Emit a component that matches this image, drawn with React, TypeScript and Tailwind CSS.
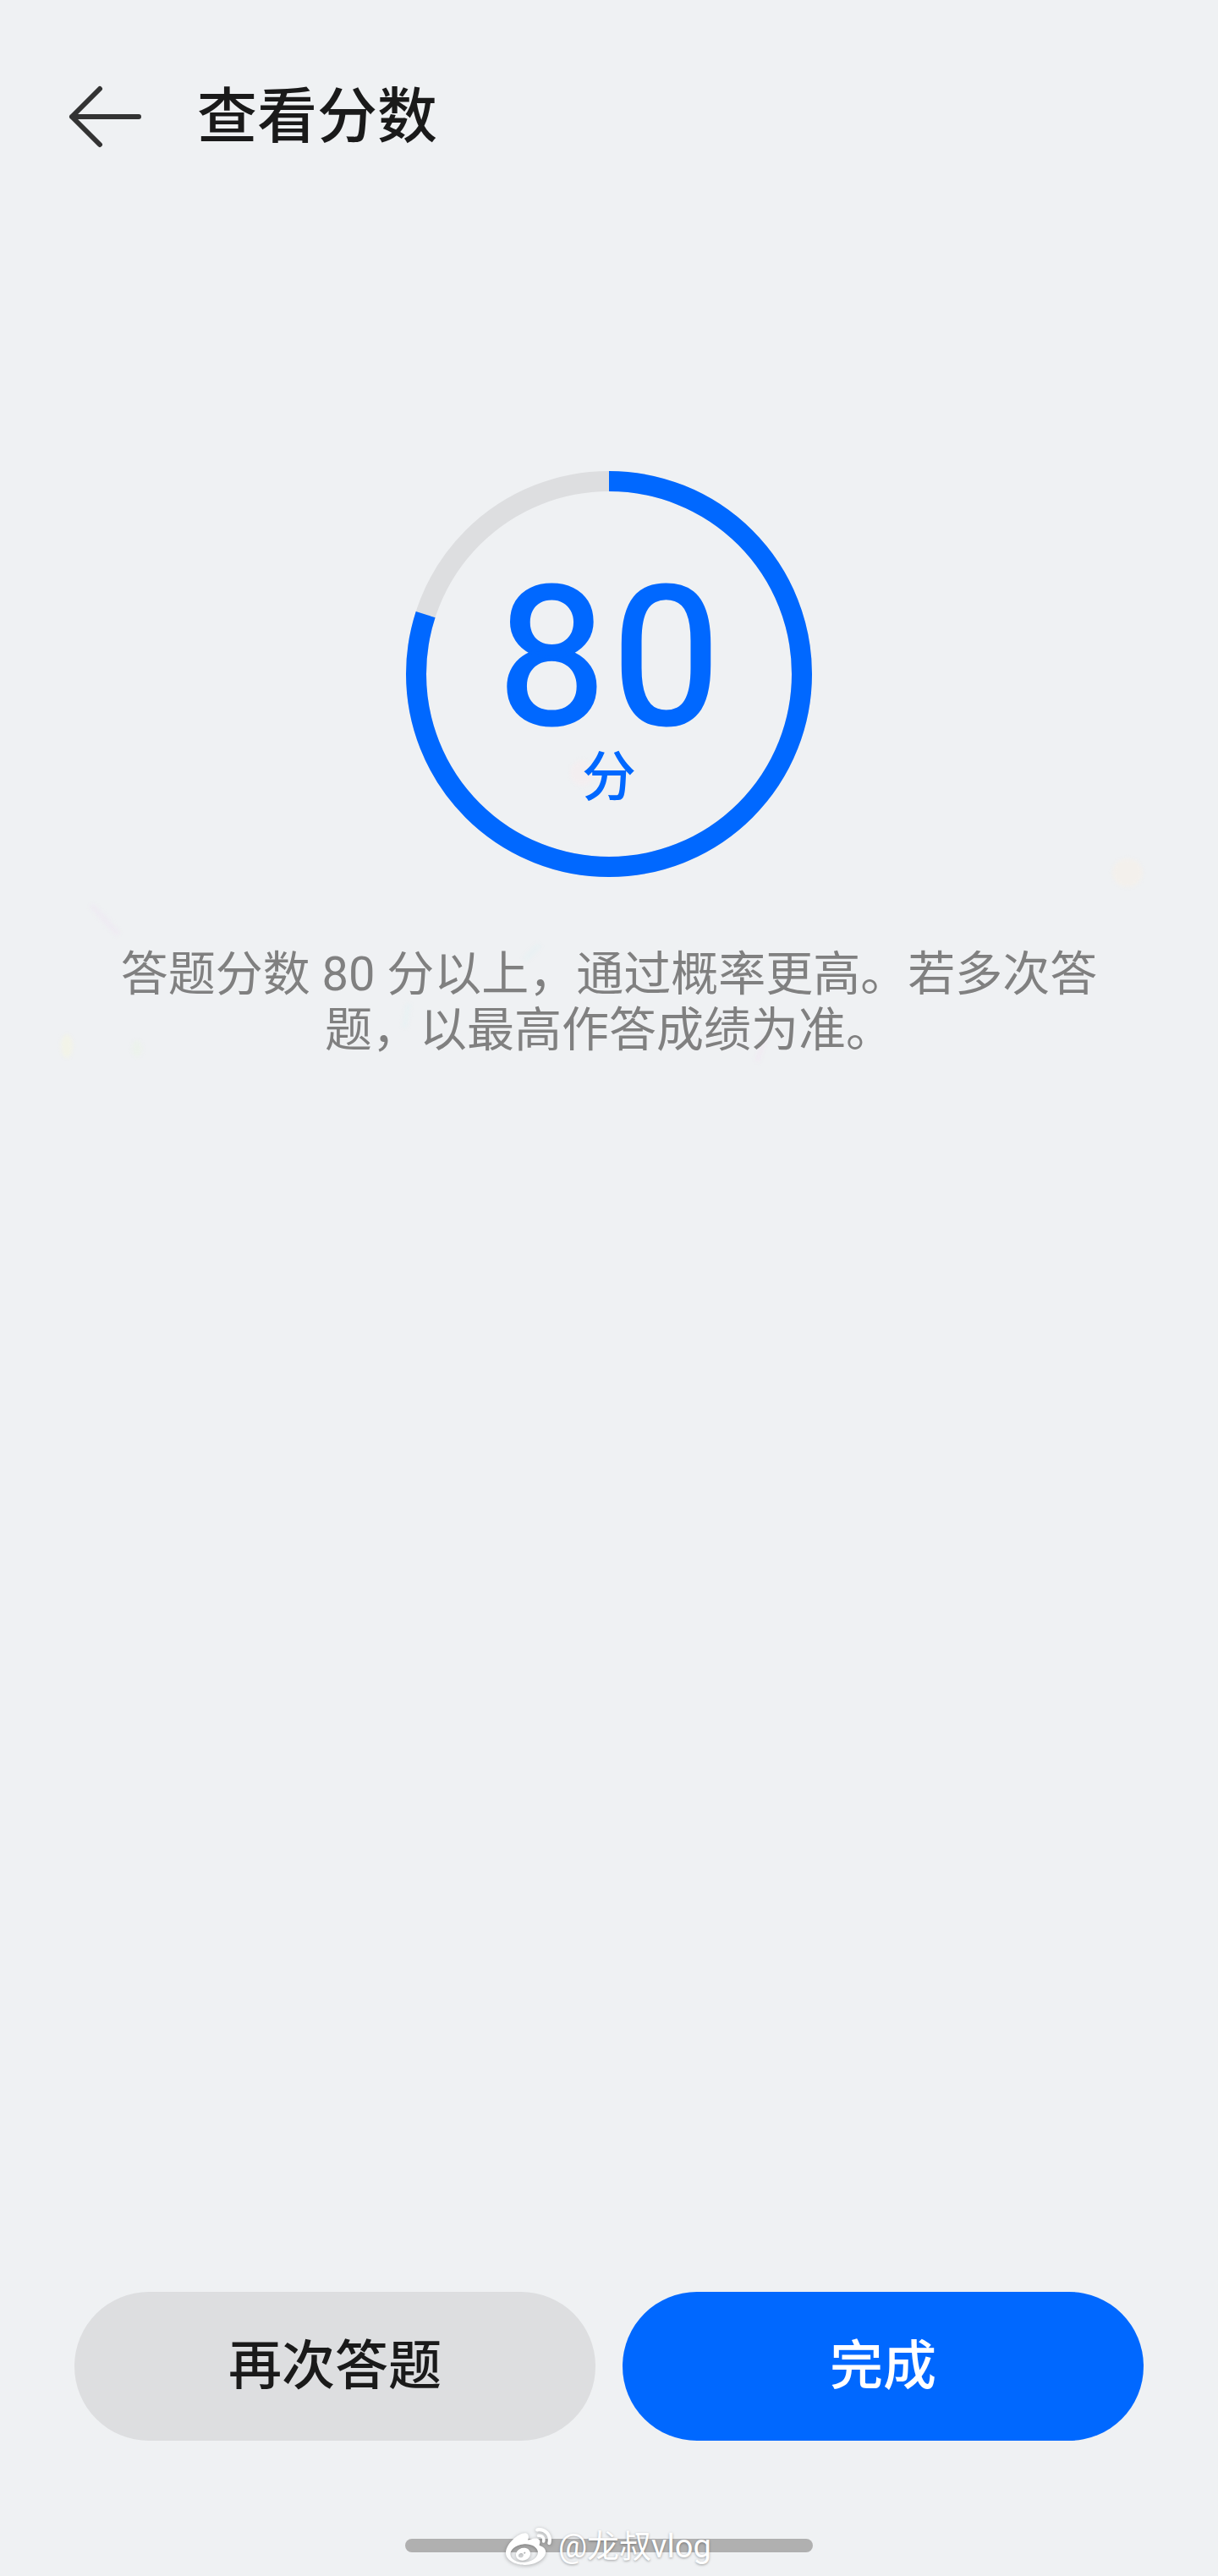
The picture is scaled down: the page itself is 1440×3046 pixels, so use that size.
import { SiSinaweibo } from "react-icons/si"

const cjk = "font-['Roboto','Noto_Sans_CJK_SC',sans-serif]"

function BackArrow() {
  return (
    <svg width="90" height="74" viewBox="0 0 90 74" fill="none" className="text-[#333333]">
      <path d="M38 4 L5 37 L38 70 M5 37 H84" stroke="currentColor" strokeWidth="6" strokeLinecap="round" strokeLinejoin="round" />
    </svg>
  )
}

function Confetti() {
  return (
    <svg width="1440" height="1300" viewBox="0 0 1440 1300" className="pointer-events-none absolute top-0 left-0 -z-10 blur-[2px]">
      <ellipse cx="1333" cy="1032" rx="18" ry="17" fill="#f3f0ec" />
      <ellipse cx="688" cy="914" rx="14" ry="15" fill="#f3eef0" />
      <path d="M108 1070 L140 1105" stroke="#eeebf2" strokeWidth="7" />
      <path d="M638 1117 L620 1135" stroke="#e9f1f3" strokeWidth="6" />
      <path d="M483 1187 L478 1215" stroke="#e9f1f3" strokeWidth="6" />
      <ellipse cx="79" cy="1237" rx="7" ry="14" fill="#f2f3e8" />
      <ellipse cx="162" cy="1240" rx="6" ry="10" fill="#ecf2ec" />
      <path d="M905 1225 L895 1255" stroke="#f0ebf2" strokeWidth="6" />
    </svg>
  )
}

function ScoreRing({ score }: { score: number }) {
  return (
    <div className="relative h-[480px] w-[480px]">
      <svg width="480" height="480" viewBox="0 0 480 480" className="-rotate-90">
        <circle cx="240" cy="240" r="228" fill="none" stroke="#dddee0" strokeWidth="24" />
        <circle
          cx="240"
          cy="240"
          r="228"
          fill="none"
          stroke="#0068ff"
          strokeWidth="24"
          pathLength={100}
          strokeDasharray={`${score} 100`}
        />
      </svg>
      <div className="absolute inset-0 flex flex-col items-center text-[#0068ff]">
        <div className="mt-[114px] h-[214px] pl-[7px] text-[228px] leading-[214px] tracking-[7px] [-webkit-text-stroke:3px_#0068ff]">
          {score}
        </div>
        <div className="text-[64px] leading-[70px] font-medium">分</div>
      </div>
    </div>
  )
}

export default function App() {
  return (
    <div className={`relative isolate flex h-[3046px] w-[1440px] flex-col overflow-hidden bg-[#eff1f3] ${cjk}`}>
      <Confetti />

      <header className="flex items-center gap-[63px] pt-[101px] pl-[80px]">
        <BackArrow />
        <h1 className="text-[71px] leading-[74px] font-medium text-[#1a1a1a]">查看分数</h1>
      </header>

      <main className="flex flex-col items-center pt-[382px]">
        <ScoreRing score={80} />
        <p className="mt-[82px] w-[1160px] text-center text-[56px] leading-[66px] text-[#808080]">
          答题分数 80 分以上，通过概率更高。若多次答题，以最高作答成绩为准。
        </p>
      </main>

      <div className="mt-auto flex gap-[32px] px-[88px]">
        <button className="h-[176px] flex-1 rounded-full bg-[#dddee0] text-[63px] font-medium text-[#1a1a1a]">再次答题</button>
        <button className="h-[176px] flex-1 rounded-full bg-[#0068ff] text-[63px] font-medium text-white">完成</button>
      </div>

      <div className="flex justify-center pt-[116px] pb-[28px]">
        <div className="h-[16px] w-[482px] rounded-full bg-[#b0b0b0]" />
      </div>

      <div className="absolute top-[2984px] left-[596px] flex items-center gap-[6px] text-white [text-shadow:0_1px_3px_rgba(0,0,0,0.35)]">
        <SiSinaweibo className="h-[54px] w-[58px] drop-shadow-[0_1px_2px_rgba(0,0,0,0.3)]" />
        <span className="text-[38px] leading-[48px]">@龙叔vlog</span>
      </div>
    </div>
  )
}
